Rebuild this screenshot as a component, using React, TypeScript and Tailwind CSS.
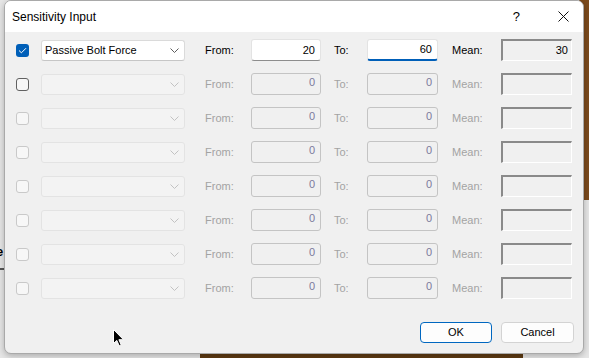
import React from "react";

const Chevron = ({ color }: { color: string }) => (
  <svg width="9" height="5" viewBox="0 0 9 5" className="shrink-0">
    <path d="M0.5 0.5 L4.5 4.5 L8.5 0.5" fill="none" stroke={color} strokeWidth="1" />
  </svg>
);

type RowProps = { kind: "active" | "enabled" | "disabled" };

function Row({ kind }: RowProps) {
  const active = kind === "active";
  const labelCls = active ? "text-black" : "text-[#a3a3a3]";
  return (
    <div className="flex h-[34px] items-center pl-[11px]">
      {active ? (
        <div className="flex h-[13px] w-[13px] items-center justify-center rounded-[3px] bg-[#005fb8]">
          <svg width="9" height="7" viewBox="0 0 9 7">
            <path d="M1 3.5 L3.4 5.8 L8 1.2" fill="none" stroke="white" strokeWidth="1" />
          </svg>
        </div>
      ) : kind === "enabled" ? (
        <div className="h-[13px] w-[13px] rounded-[3px] border border-[#616161] bg-[#f7f7f7]" />
      ) : (
        <div className="h-[13px] w-[13px] rounded-[3px] border border-[#c9c9c9] bg-[#f7f7f7]" />
      )}
      {active ? (
        <div className="ml-[12px] flex h-[21px] w-[144px] items-center justify-between rounded-[3px] border border-[#dadada] border-b-[#c6c6c6] bg-white pl-[3px] pr-[5px] text-[11px] text-black">
          <span>Passive Bolt Force</span>
          <Chevron color="#5c5c5c" />
        </div>
      ) : (
        <div className="ml-[12px] flex h-[21px] w-[144px] items-center justify-end rounded-[3px] border border-[#e3e3e3] bg-[#f3f3f3] pr-[5px]">
          <Chevron color="#c2c2c2" />
        </div>
      )}
      <div className={`ml-[20px] w-[46px] text-[11px] ${labelCls}`}>From:</div>
      {active ? (
        <div className="flex h-[22px] w-[70px] items-center justify-end rounded-[3px] border border-[#e3e3e3] border-b-[#8d8d8d] bg-white pr-[5px] text-[11px] text-black">
          20
        </div>
      ) : (
        <div className="flex h-[22px] w-[70px] items-center justify-end rounded-[3px] border border-[#c4c4c4] bg-[#f0f0f0] pb-[4px] pr-[5px] text-[11px] text-[#7c7a9c]">
          0
        </div>
      )}
      <div className={`ml-[13px] w-[33px] text-[11px] ${labelCls}`}>To:</div>
      {active ? (
        <div className="flex h-[22px] w-[71px] items-center justify-end rounded-[3px] border border-[#e3e3e3] border-b-2 border-b-[#005fb8] bg-white pr-[5px] text-[11px] text-black">
          60
        </div>
      ) : (
        <div className="flex h-[22px] w-[71px] items-center justify-end rounded-[3px] border border-[#c4c4c4] bg-[#f0f0f0] pb-[4px] pr-[5px] text-[11px] text-[#7c7a9c]">
          0
        </div>
      )}
      <div className={`ml-[14px] w-[49px] text-[11px] ${labelCls}`}>Mean:</div>
      <div className="flex h-[22px] w-[71px] items-start justify-end border-l-2 border-t-2 border-b border-r border-l-[#8a8a8a] border-t-[#8a8a8a] border-b-white border-r-white bg-[#f0f0f0] pr-[3px] pt-[1px] text-[11px] text-black">
        {active ? "30" : ""}
      </div>
    </div>
  );
}

export default function App() {
  const kinds: RowProps["kind"][] = [
    "active",
    "enabled",
    "disabled",
    "disabled",
    "disabled",
    "disabled",
    "disabled",
    "disabled",
  ];
  return (
    <div className="relative h-[358px] w-[589px] overflow-hidden bg-[#e6e6e6] font-['Liberation_Sans',Arial,sans-serif]">
      {/* desktop background bits */}
      <div className="absolute right-0 top-0 h-[200px] w-[10px] bg-[#7b4a1c]" />
      <div className="absolute bottom-0 left-[200px] h-[6px] w-[323px] bg-[#5e3a12]" />
      <div className="absolute left-0 top-[268px] h-[2px] w-[6px] bg-[#555]" />
      <div className="absolute left-[-4px] top-[245px] text-[13px] font-bold leading-none text-black">e</div>

      {/* dialog window */}
      <div className="absolute left-[4px] top-0 flex h-[354px] w-[580px] flex-col overflow-hidden rounded-[7px] border border-[#a9a9a9] bg-[#f0f0f0] shadow-[0_2px_6px_rgba(0,0,0,0.25)]">
        <div className="flex h-[31px] shrink-0 items-center bg-white pl-[7px]">
          <span className="text-[12px] text-black">Sensitivity Input</span>
          <span className="ml-auto mr-[38px] text-[13px] text-black">?</span>
          <svg width="11" height="11" viewBox="0 0 11 11" className="mr-[14px]">
            <path d="M0.5 0.5 L10.5 10.5 M10.5 0.5 L0.5 10.5" stroke="#111" strokeWidth="1" />
          </svg>
        </div>
        <div className="flex flex-1 flex-col pt-[1px]">
          {kinds.map((k, i) => (
            <Row key={i} kind={k} />
          ))}
          <div className="mt-[17px] flex justify-end gap-[9px] pr-[9px]">
            <button className="flex h-[21px] w-[72px] items-center justify-center rounded-[4px] border border-[#0067c0] bg-[#fdfdfd] text-[11px] text-black">
              OK
            </button>
            <button className="flex h-[21px] w-[73px] items-center justify-center rounded-[4px] border border-[#d3d3d3] bg-[#fdfdfd] text-[11px] text-black">
              Cancel
            </button>
          </div>
        </div>
      </div>

      {/* mouse cursor */}
      <svg className="absolute left-[113px] top-[329px]" width="12" height="18" viewBox="0 0 12 18">
        <path d="M0.5 0.5 L0.5 14.5 L3.8 11.4 L6.2 16.8 L8.2 15.9 L5.9 10.7 L10.5 10.7 Z" fill="black" stroke="white" strokeWidth="1" />
      </svg>
    </div>
  );
}
